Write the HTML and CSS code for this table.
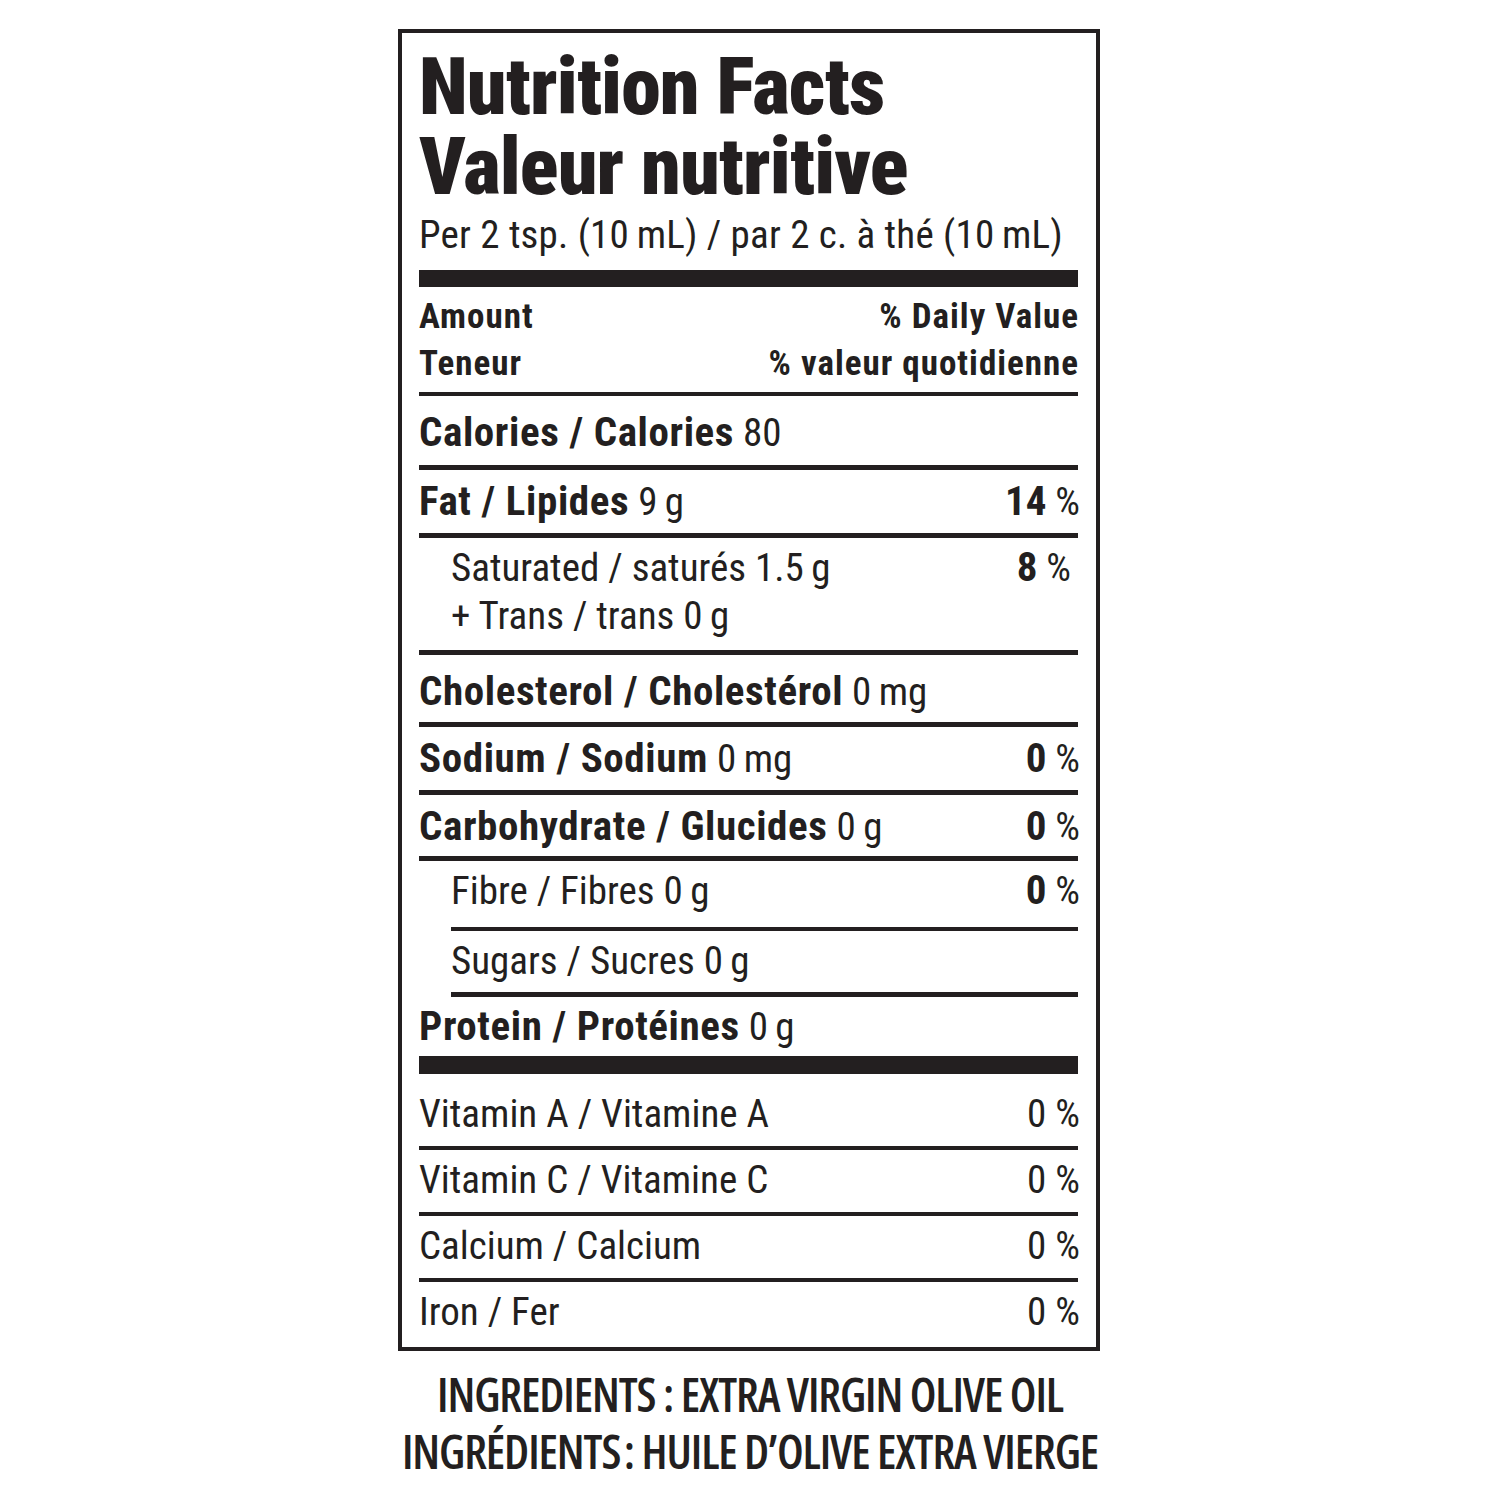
FILE: index.html
```html
<!DOCTYPE html>
<html lang="en">
<head>
<meta charset="utf-8">
<title>Nutrition Facts / Valeur nutritive</title>
<link rel="stylesheet" href="styles.css">
</head>
<body>
<main class="page">
  <section class="label">
    <h1 class="title"><span class="title-line">Nutrition Facts</span><span class="title-line">Valeur nutritive</span></h1>
    <p class="serving">Per 2 tsp. (10&thinsp;mL) / par 2 c. à thé (10&thinsp;mL)</p>
    <div class="bar"></div>
    <div class="head">
      <div class="head-col">
        <span>Amount</span>
        <span>Teneur</span>
      </div>
      <div class="head-col right">
        <span>% Daily Value</span>
        <span>% valeur quotidienne</span>
      </div>
    </div>
    <div class="row row-cal"><span><b>Calories / Calories</b> 80</span></div>
    <div class="row"><span><b>Fat / Lipides</b> 9&thinsp;g</span><span class="pct"><b>14</b> %</span></div>
    <div class="row sub row-sat">
      <span>Saturated / saturés 1.5&thinsp;g<br>+ Trans / trans 0&thinsp;g</span>
      <span class="pct pct-in"><b>8</b> %</span>
    </div>
    <div class="row row-chol"><span><b>Cholesterol / Cholestérol</b> 0&thinsp;mg</span></div>
    <div class="row"><span><b>Sodium / Sodium</b> 0&thinsp;mg</span><span class="pct"><b>0</b> %</span></div>
    <div class="row row-carb"><span><b>Carbohydrate / Glucides</b> 0&thinsp;g</span><span class="pct"><b>0</b> %</span></div>
    <div class="row sub sub-line"><span>Fibre / Fibres 0&thinsp;g</span><span class="pct"><b>0</b> %</span></div>
    <div class="row sub"><span>Sugars / Sucres 0&thinsp;g</span></div>
    <div class="row row-prot"><span><b>Protein / Protéines</b> 0&thinsp;g</span></div>
    <div class="vit vit-first"><span>Vitamin A / Vitamine A</span><span class="pct">0 %</span></div>
    <div class="vit"><span>Vitamin C / Vitamine C</span><span class="pct">0 %</span></div>
    <div class="vit"><span>Calcium / Calcium</span><span class="pct">0 %</span></div>
    <div class="vit vit-last"><span>Iron / Fer</span><span class="pct">0 %</span></div>
  </section>
  <section class="ingredients">
    <p>INGREDIENTS : EXTRA VIRGIN OLIVE OIL</p>
    <p>INGRÉDIENTS&#8202;: HUILE D’OLIVE EXTRA VIERGE</p>
  </section>
</main>
</body>
</html>
```
FILE: styles.css
```css
html, body {
  margin: 0;
  padding: 0;
  background: #ffffff;
}

body {
  color: #231f20;
  font-family: Roboto, "Liberation Sans", sans-serif;
  font-stretch: 75%;
}

.page {
  padding-top: 29px;
  display: flex;
  flex-direction: column;
  align-items: center;
}

.label {
  width: 702px;
  box-sizing: border-box;
  border: 4px solid #231f20;
  padding: 14px 18px 0 17px;
  margin-left: -2px;
  display: flex;
  flex-direction: column;
}

.title {
  margin: 0;
  font-size: 80px;
  line-height: 80px;
  font-weight: 900;
  letter-spacing: -0.8px;
  display: flex;
  flex-direction: column;
}

.title-line {
  display: block;
  height: 80px;
}

.serving {
  margin: 6px 0 0;
  font-size: 39px;
  line-height: 44px;
  font-weight: 400;
  letter-spacing: 0.2px;
}

.bar {
  height: 17px;
  background: #231f20;
  margin-top: 13px;
}

.head {
  display: flex;
  justify-content: space-between;
  padding: 6px 0 5px;
  border-bottom: 4px solid #231f20;
  font-size: 35px;
  line-height: 47px;
  font-weight: 700;
  letter-spacing: 1px;
}

.head-col {
  display: flex;
  flex-direction: column;
}

.head-col.right {
  align-items: flex-end;
  margin-right: -1px;
}

.row {
  display: flex;
  justify-content: space-between;
  align-items: flex-start;
  font-size: 39px;
  line-height: 40px;
  font-weight: 400;
  padding: 12px 0 11px;
  border-bottom: 5px solid #231f20;
}

.row b {
  font-weight: 700;
  font-size: 41px;
  line-height: 0;
  letter-spacing: 0.6px;
}

.row-cal {
  padding: 17px 0 12px;
}

.row-sat {
  line-height: 48px;
  padding: 6px 0 10px;
}

.row-chol {
  padding: 17px 0 10px;
}

.row-carb {
  padding: 12px 0 9px;
}

.row-prot {
  padding: 10px 0 9px;
  border-bottom: 18px solid #231f20;
}

.sub {
  padding-left: 32px;
}

.sub-line {
  border-bottom: none;
  padding-top: 10px;
  padding-bottom: 16px;
}

.sub-line + .sub {
  margin-left: 32px;
  padding-left: 0;
  padding-top: 10px;
  border-top: 4px solid #231f20;
}

.pct {
  white-space: nowrap;
  margin-right: -2px;
}

.pct b {
  letter-spacing: 0;
}

.pct-in {
  margin-right: 7px;
}

.vit {
  display: flex;
  justify-content: space-between;
  font-size: 39px;
  line-height: 40px;
  font-weight: 400;
  padding: 10px 0 12px;
  border-bottom: 4px solid #231f20;
}

.vit-first {
  padding-top: 20px;
}

.vit-last {
  border-bottom: none;
  padding-bottom: 15px;
}

.ingredients {
  margin-top: 15px;
  text-align: center;
  font-family: "Open Sans", "Liberation Sans", sans-serif;
  font-stretch: 75%;
  font-weight: 600;
  font-size: 47px;
  line-height: 57px;
  letter-spacing: -1.1px;
}

.ingredients p {
  margin: 0;
}
```
